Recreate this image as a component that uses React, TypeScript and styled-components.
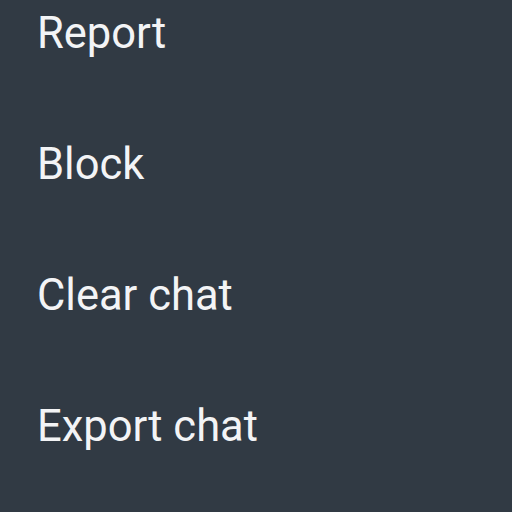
import React from "react";
import styled, { createGlobalStyle } from "styled-components";

const Global = createGlobalStyle`
  html, body {
    margin: 0;
    padding: 0;
    background: #313a44;
  }
  body {
    width: 512px;
    height: 512px;
    overflow: hidden;
  }
`;

const Menu = styled.ul`
  list-style: none;
  margin: -32px 0 0 0;
  padding: 0;
  display: flex;
  flex-direction: column;
  background: #313a44;
  min-height: 560px;
`;

const Item = styled.li`
  height: 131px;
  display: flex;
  align-items: center;
  padding-left: 37px;
  font-family: Roboto, "Noto Sans", sans-serif;
  font-size: 43.5px;
  line-height: 1;
  color: #f3f4f6;
`;

const items = ["Report", "Block", "Clear chat", "Export chat"];

export default function App() {
  return (
    <>
      <Global />
      <Menu>
        {items.map((t) => (
          <Item key={t}>{t}</Item>
        ))}
      </Menu>
    </>
  );
}
